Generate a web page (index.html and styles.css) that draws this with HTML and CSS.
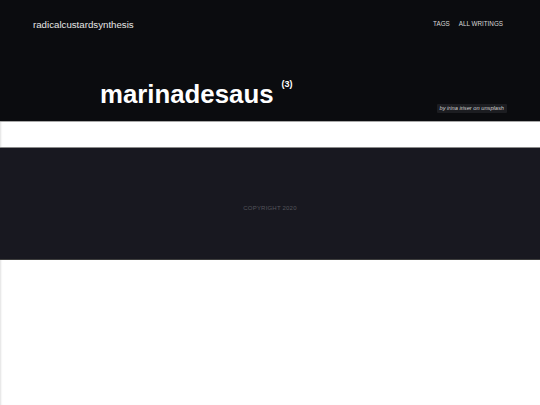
FILE: index.html
```html
<!DOCTYPE html>
<html lang="en">
<head>
<meta charset="utf-8">
<title>marinadesaus</title>
<link rel="stylesheet" href="styles.css">
</head>
<body>
<header class="hero">
  <nav class="topbar">
    <a class="brand" href="#">radicalcustardsynthesis</a>
    <ul class="menu">
      <li><a href="#">TAGS</a></li>
      <li><a href="#">ALL WRITINGS</a></li>
    </ul>
  </nav>
  <div class="hero-bottom">
    <h1 class="title">marinadesaus<span class="count">(3)</span></h1>
    <span class="credit">by irina iriser on unsplash</span>
  </div>
</header>
<main class="content"></main>
<footer class="footer">
  <p class="copyright">COPYRIGHT 2020</p>
</footer>
</body>
</html>
```
FILE: styles.css
```css
html, body {
  margin: 0;
  padding: 0;
}
body {
  min-height: 100vh;
  background: #ffffff;
  box-shadow: inset 2px 0 2px -1px rgba(0, 0, 0, 0.12);
  font-family: "Liberation Sans", Arial, sans-serif;
}
a {
  text-decoration: none;
  color: inherit;
}
.hero {
  box-sizing: border-box;
  height: 122px;
  background: #0b0c0f;
  border-bottom: 1px solid #a8a8a8;
  display: flex;
  flex-direction: column;
  color: #ffffff;
}
.topbar {
  display: flex;
  justify-content: space-between;
  align-items: flex-start;
  padding: 18px 37px 0 33px;
}
.brand {
  font-size: 9.7px;
  line-height: 14px;
  color: #e6e6e6;
}
.menu {
  list-style: none;
  margin: 1px 0 0 0;
  padding: 0;
  display: flex;
  gap: 9px;
  font-size: 6.3px;
  line-height: 10px;
}
.menu a {
  color: #d8d8d8;
}
.hero-bottom {
  margin-top: auto;
  display: flex;
  justify-content: space-between;
  align-items: flex-end;
  padding: 0 33px 8px 100px;
}
.title {
  margin: 0 0 4px 0;
  font-size: 25.8px;
  line-height: 30px;
  font-weight: 700;
  color: #ffffff;
}
.count {
  font-size: 9px;
  margin-left: 8px;
  vertical-align: 16px;
  line-height: 10px;
}
.credit {
  font-size: 5.7px;
  font-style: italic;
  line-height: 9px;
  padding: 0 3px;
  color: #cfcfcf;
  background: #1c1d21;
  border-radius: 1px;
}
.content {
  display: block;
  height: 25px;
}
.footer {
  background: #181820;
  border-top: 1px solid #8a8a8a;
  border-bottom: 1px solid #3c3c3c;
  height: 111px;
  box-sizing: content-box;
  display: flex;
  justify-content: center;
}
.copyright {
  margin: 56px 0 0 0;
  font-size: 6px;
  line-height: 8px;
  letter-spacing: 0.2px;
  color: #55555c;
}
```
